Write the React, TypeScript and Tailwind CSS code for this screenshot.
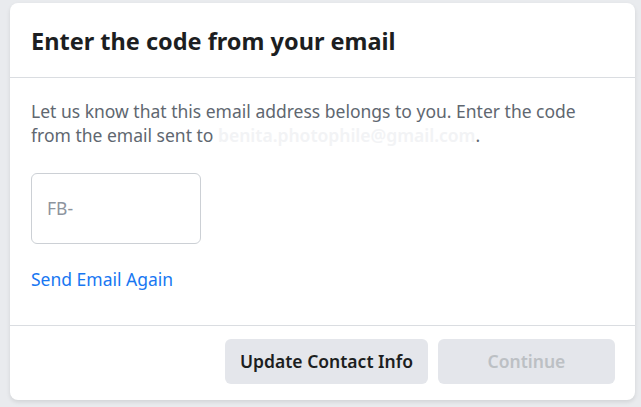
export default function App() {
  return (
    <div className="w-[641px] h-[407px] bg-[#e9ebee] pt-[3px] pl-[10px]" style={{ fontFamily: '"Noto Sans", "Open Sans", sans-serif' }}>
      <div className="w-[625px] h-[397px] bg-white rounded-[8px] shadow-[0_2px_4px_rgba(0,0,0,0.1)] flex flex-col">
        <div className="h-[75px] border-b border-[#dadde1] flex items-center pl-[21px] pt-[3px]">
          <h2 className="text-[23.5px] font-bold text-[#1c1e21]">Enter the code from your email</h2>
        </div>
        <div className="flex-1 pl-[21px] pr-[30px] pt-[21px]">
          <p className="text-[17.5px] leading-[24px] text-[#606770]">
            Let us know that this email address belongs to you. Enter the code from the email sent to{" "}
            <span className="text-[#f2f3f5] font-semibold">benita.photophile@gmail.com</span>.
          </p>
          <div className="mt-[26px] w-[170px] h-[71px] border border-[#ccd0d5] rounded-[6px] flex items-center pl-[15px]">
            <span className="text-[17.5px] text-[#8d949e]">FB-</span>
          </div>
          <div className="mt-[23px] text-[17.5px] leading-[24px] text-[#1877f2]">Send Email Again</div>
        </div>
        <div className="h-[75px] border-t border-[#dadde1] flex items-center justify-end gap-[10px] pr-[20px] pb-[4px]">
          <button className="h-[45px] w-[203px] rounded-[6px] bg-[#e4e6eb] text-[17.5px] font-semibold text-[#1c1e21]">Update Contact Info</button>
          <button className="h-[45px] w-[177px] rounded-[6px] bg-[#e4e6eb] text-[17.5px] font-semibold text-[#bcc0c4]">Continue</button>
        </div>
      </div>
    </div>
  );
}
